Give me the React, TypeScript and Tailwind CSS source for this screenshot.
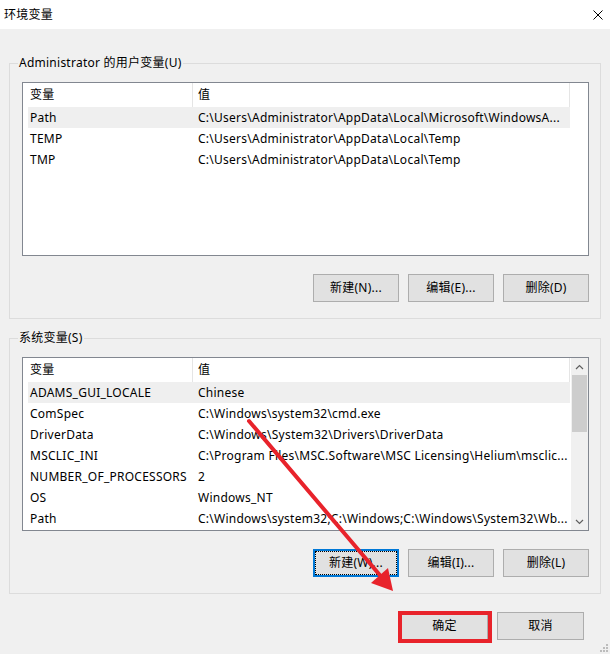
import React from "react";

type Row = { name: string; value: string; selected?: boolean };

const userVars: Row[] = [
  { name: "Path", value: "C:\\Users\\Administrator\\AppData\\Local\\Microsoft\\WindowsA...", selected: true },
  { name: "TEMP", value: "C:\\Users\\Administrator\\AppData\\Local\\Temp" },
  { name: "TMP", value: "C:\\Users\\Administrator\\AppData\\Local\\Temp" },
];

const systemVars: Row[] = [
  { name: "ADAMS_GUI_LOCALE", value: "Chinese", selected: true },
  { name: "ComSpec", value: "C:\\Windows\\system32\\cmd.exe" },
  { name: "DriverData", value: "C:\\Windows\\System32\\Drivers\\DriverData" },
  { name: "MSCLIC_INI", value: "C:\\Program Files\\MSC.Software\\MSC Licensing\\Helium\\msclic..." },
  { name: "NUMBER_OF_PROCESSORS", value: "2" },
  { name: "OS", value: "Windows_NT" },
  { name: "Path", value: "C:\\Windows\\system32;C:\\Windows;C:\\Windows\\System32\\Wb..." },
];

function Button({ label, focused }: { label: string; focused?: boolean }) {
  return (
    <div
      className={
        focused
          ? "w-[86px] h-[28px] flex items-center justify-center bg-[#e1e1e1] border-2 border-[#0078d7] outline outline-1 outline-dotted outline-black outline-offset-[-3px]"
          : "w-[86px] h-[28px] flex items-center justify-center bg-[#e1e1e1] border border-[#adadad]"
      }
    >
      {label}
    </div>
  );
}

function ListHeader() {
  return (
    <div className="flex h-[24px] shrink-0">
      <div className="w-[170px] border-r border-[#e5e5e5] flex items-center pl-[7px]">变量</div>
      <div className="w-[377px] border-r border-[#e5e5e5] flex items-center pl-[5px]">值</div>
    </div>
  );
}

function ListRows({ rows }: { rows: Row[] }) {
  return (
    <div className="flex flex-col">
      {rows.map((r, i) => (
        <div
          key={i}
          className={
            r.selected
              ? "ml-[5px] w-[542px] h-[21px] flex items-center bg-[#efefef]"
              : "ml-[5px] w-[542px] h-[21px] flex items-center"
          }
        >
          <div className="w-[165px] pl-[2px] whitespace-nowrap overflow-hidden">{r.name}</div>
          <div className="flex-1 pl-[5px] whitespace-nowrap overflow-hidden">{r.value}</div>
        </div>
      ))}
    </div>
  );
}

function ScrollBar() {
  return (
    <div className="w-[17px] h-full bg-[#f0f0f0] flex flex-col">
      <div className="h-[17px] flex items-center justify-center">
        <svg width="9" height="6" viewBox="0 0 9 6">
          <path d="M1 5 L4.5 1.5 L8 5" fill="none" stroke="#606060" strokeWidth="1.2" />
        </svg>
      </div>
      <div className="flex-1 px-[1px]">
        <div className="h-[57px] bg-[#cdcdcd]" />
      </div>
      <div className="h-[17px] flex items-center justify-center">
        <svg width="9" height="6" viewBox="0 0 9 6">
          <path d="M1 1 L4.5 4.5 L8 1" fill="none" stroke="#606060" strokeWidth="1.2" />
        </svg>
      </div>
    </div>
  );
}

function Group({
  title,
  rows,
  buttons,
  scroll,
  className,
}: {
  title: string;
  rows: Row[];
  buttons: { label: string; focused?: boolean }[];
  scroll?: boolean;
  className: string;
}) {
  return (
    <div className={"relative border border-[#dcdcdc] h-[256px] pl-[12px] pr-[11px] pt-[18px] " + className}>
      <div className="absolute -top-[9px] left-[8px] px-[1px] bg-[#f0f0f0] leading-[16px]">{title}</div>
      <div className="h-[174px] border border-[#828790] bg-white flex overflow-hidden">
        <div className="flex-1 flex flex-col">
          <ListHeader />
          <ListRows rows={rows} />
        </div>
        {scroll && <ScrollBar />}
      </div>
      <div className="mt-[18px] flex justify-end gap-[9px]">
        {buttons.map((b, i) => (
          <Button key={i} label={b.label} focused={b.focused} />
        ))}
      </div>
    </div>
  );
}

export default function App() {
  return (
    <div className="relative w-[610px] h-[654px] overflow-hidden bg-[#f0f0f0] text-[12px] tracking-[0.25px] text-black font-['Segoe_UI','Noto_Sans','Noto_Sans_CJK_SC',sans-serif]">
      {/* title bar */}
      <div className="h-[29px] bg-white flex items-center justify-between pl-[4px] pr-[7px]">
        <span>环境变量</span>
        <svg width="10" height="10" viewBox="0 0 10 10">
          <path d="M0.5 0.5 L9.5 9.5 M9.5 0.5 L0.5 9.5" stroke="#000" strokeWidth="1" />
        </svg>
      </div>

      <div className="px-[9px]">
        <Group
          title="Administrator 的用户变量(U)"
          rows={userVars}
          className="mt-[34px]"
          buttons={[{ label: "新建(N)..." }, { label: "编辑(E)..." }, { label: "删除(D)" }]}
        />
        <Group
          title="系统变量(S)"
          rows={systemVars}
          scroll
          className="mt-[19px]"
          buttons={[{ label: "新建(W)...", focused: true }, { label: "编辑(I)..." }, { label: "删除(L)" }]}
        />
      </div>

      {/* dialog buttons */}
      <div className="mt-[18px] flex justify-end gap-[9px] pr-[26px]">
        <div className="w-[87px] h-[28px] flex items-center justify-center bg-[#e1e1e1] border border-[#adadad]">确定</div>
        <div className="w-[87px] h-[28px] flex items-center justify-center bg-[#e1e1e1] border border-[#adadad]">取消</div>
      </div>

      {/* size grip */}
      <svg className="absolute right-[1px] bottom-[1px]" width="9" height="9" viewBox="0 0 9 9">
        <rect x="6" y="0" width="2" height="2" fill="#bcbcbc" />
        <rect x="3" y="3" width="2" height="2" fill="#bcbcbc" />
        <rect x="6" y="3" width="2" height="2" fill="#bcbcbc" />
        <rect x="0" y="6" width="2" height="2" fill="#bcbcbc" />
        <rect x="3" y="6" width="2" height="2" fill="#bcbcbc" />
        <rect x="6" y="6" width="2" height="2" fill="#bcbcbc" />
      </svg>

      {/* red annotation: arrow and highlight box */}
      <svg className="absolute inset-0 pointer-events-none" width="610" height="654" viewBox="0 0 610 654">
        <line x1="249" y1="421" x2="384" y2="580" stroke="#e8232b" strokeWidth="4" strokeLinecap="round" />
        <polygon points="393,591 371,583 388,568" fill="#e8232b" />
        <rect x="400" y="613" width="90" height="28" fill="none" stroke="#e8232b" strokeWidth="4" />
      </svg>
    </div>
  );
}
